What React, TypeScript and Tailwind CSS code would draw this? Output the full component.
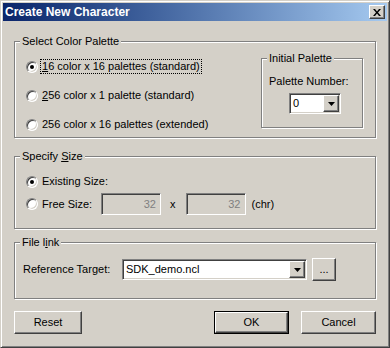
import type { ReactNode } from "react";

function Radio({ checked }: { checked?: boolean }) {
  return (
    <span className="flex h-[12px] w-[12px] shrink-0 items-center justify-center rounded-full border border-t-[#808080] border-l-[#808080] border-b-white border-r-white bg-white shadow-[inset_1px_1px_0_#404040,inset_-1px_-1px_0_#d4d0c8]">
      {checked && <span className="h-[4px] w-[4px] rounded-full bg-black" />}
    </span>
  );
}

function Group({ title, className, children }: { title: ReactNode; className?: string; children?: ReactNode }) {
  return (
    <div className={`relative border border-[#808080] shadow-[inset_1px_1px_0_#fff,1px_1px_0_#fff] ${className ?? ""}`}>
      <span className="absolute -top-[7px] left-[5px] bg-[#d4d0c8] px-[2px] leading-[13px]">{title}</span>
      {children}
    </div>
  );
}

function Arrow() {
  return (
    <span className="flex h-full w-[16px] items-center justify-center border border-t-white border-l-white border-b-[#404040] border-r-[#404040] bg-[#d4d0c8] shadow-[inset_-1px_-1px_0_#808080]">
      <svg width="7" height="4" viewBox="0 0 7 4">
        <path d="M0 0h7L3.5 4z" fill="#000" />
      </svg>
    </span>
  );
}

function Combo({ value, className }: { value: string; className?: string }) {
  return (
    <div className={`flex h-[21px] items-stretch border border-t-[#808080] border-l-[#808080] border-b-white border-r-white bg-white p-[1px] shadow-[inset_1px_1px_0_#404040,inset_-1px_-1px_0_#d4d0c8] ${className ?? ""}`}>
      <span className="flex flex-1 items-center pl-[2px]">{value}</span>
      <Arrow />
    </div>
  );
}

function Field({ value }: { value: string }) {
  return (
    <div className="flex h-[22px] w-[60px] items-center justify-end border border-t-[#808080] border-l-[#808080] border-b-white border-r-white bg-[#d4d0c8] pr-[4px] text-[#808080] shadow-[inset_1px_1px_0_#404040,inset_-1px_-1px_0_#d4d0c8]">
      {value}
    </div>
  );
}

function Button({ children, className, isDefault }: { children: ReactNode; className?: string; isDefault?: boolean }) {
  const face = (
    <div className="flex h-full w-full items-center justify-center border border-t-white border-l-white border-b-[#404040] border-r-[#404040] shadow-[inset_-1px_-1px_0_#808080]">
      {children}
    </div>
  );
  return (
    <div className={`h-[23px] ${isDefault ? "border border-black" : ""} ${className ?? ""}`}>{face}</div>
  );
}

export default function App() {
  return (
    <div className="h-[348px] w-[390px] border border-t-[#d4d0c8] border-l-[#d4d0c8] border-b-[#404040] border-r-[#404040] bg-[#d4d0c8] p-[2px] font-['Liberation_Sans',Arial,sans-serif] text-[11px] leading-[13px] text-black shadow-[inset_1px_1px_0_#fff,inset_-1px_-1px_0_#808080]">
      {/* title bar */}
      <div className="flex h-[18px] items-center bg-linear-to-r from-[#0a246a] to-[#a6caf0] pl-[2px] pr-[2px]">
        <span className="text-[12px] font-bold text-white">Create New Character</span>
        <div className="ml-auto flex h-[14px] w-[16px] items-center justify-center border border-t-white border-l-white border-b-[#404040] border-r-[#404040] bg-[#d4d0c8] shadow-[inset_-1px_-1px_0_#808080]">
          <svg width="8" height="7" viewBox="0 0 8 7">
            <path d="M0 0h2l2 2.5L6 0h2L5 3.5 8 7H6L4 4.5 2 7H0l3-3.5z" fill="#000" />
          </svg>
        </div>
      </div>

      <div className="flex flex-col px-[11px]">
        <Group title="Select Color Palette" className="mt-[20px] flex h-[97px]">
          <div className="flex flex-col gap-[10px] pl-[11px] pt-[15px]">
            <div className="flex h-[19px] items-center">
              <Radio checked />
              <span className="ml-[2px] border border-dotted border-black px-[1px]">
                <u>1</u>6 color x 16 palettes (standard)
              </span>
            </div>
            <div className="flex h-[19px] items-center">
              <Radio />
              <span className="ml-[2px] border border-transparent px-[1px]">
                <u>2</u>56 color x 1 palette (standard)
              </span>
            </div>
            <div className="flex h-[19px] items-center">
              <Radio />
              <span className="ml-[2px] border border-transparent px-[1px]">256 color x 16 palettes (extended)</span>
            </div>
          </div>
          <Group title="Initial Palette" className="mr-[12px] ml-auto mt-[16px] h-[70px] w-[102px]">
            <div className="flex flex-col pl-[7px] pt-[16px]">
              <span>Palette Number:</span>
              <Combo value="0" className="ml-[20px] mt-[5px] w-[52px]" />
            </div>
          </Group>
        </Group>

        <Group
          title={
            <>
              Specify <u>S</u>ize
            </>
          }
          className="mt-[18px] h-[73px]"
        >
          <div className="flex flex-col pl-[11px] pt-[15px]">
            <div className="flex h-[19px] items-center">
              <Radio checked />
              <span className="ml-[3px] px-[1px]">Existing Size:</span>
            </div>
            <div className="mt-[2px] flex h-[22px] items-center">
              <Radio />
              <span className="ml-[3px] w-[60px] px-[1px]">Free Size:</span>
              <Field value="32" />
              <span className="ml-[9px] mr-[10px]">x</span>
              <Field value="32" />
              <span className="ml-[6px]">(chr)</span>
            </div>
          </div>
        </Group>

        <Group
          title={
            <>
              File l<u>i</u>nk
            </>
          }
          className="mt-[13px] h-[57px]"
        >
          <div className="flex items-center pl-[8px] pt-[15px]">
            <span className="w-[99px]">Reference Target:</span>
            <Combo value="SDK_demo.ncl" className="w-[185px]" />
            <Button className="ml-[5px] h-[22px] w-[24px]">...</Button>
          </div>
        </Group>

        <div className="mt-[12px] flex">
          <Button className="w-[68px]">Reset</Button>
          <Button className="ml-auto w-[75px]" isDefault>
            OK
          </Button>
          <Button className="ml-[12px] w-[75px]">Cancel</Button>
        </div>
      </div>
    </div>
  );
}
